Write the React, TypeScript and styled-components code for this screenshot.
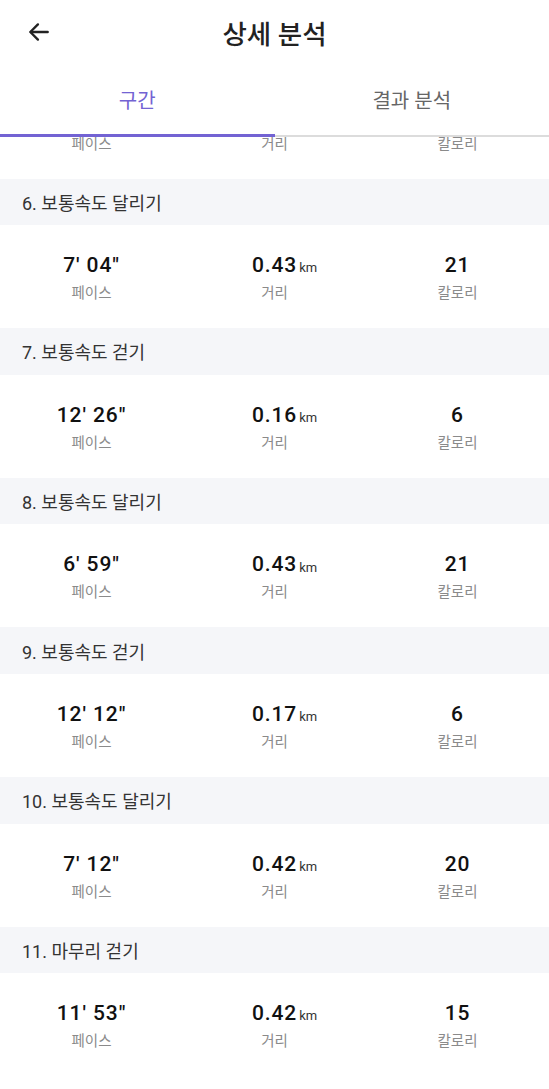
import React, { useLayoutEffect, useRef } from 'react';
import styled, { createGlobalStyle } from 'styled-components';

const GlobalStyle = createGlobalStyle`
  html, body {
    margin: 0;
    padding: 0;
    background: #ffffff;
  }
  body {
    font-family: Roboto, "Noto Sans CJK KR", "Noto Sans", sans-serif;
    -webkit-font-smoothing: antialiased;
  }
`;

const Screen = styled.div`
  display: flex;
  flex-direction: column;
  width: 549px;
  height: 1089px;
  overflow: hidden;
  background: #fff;
`;

const TopBar = styled.header`
  position: relative;
  display: flex;
  align-items: center;
  justify-content: center;
  height: 64px;
  flex-shrink: 0;
`;

const BackButton = styled.button`
  position: absolute;
  left: 26px;
  top: 19px;
  display: flex;
  padding: 0;
  border: 0;
  background: none;
  color: #222;
  cursor: pointer;
`;

const Title = styled.h1`
  margin: 0;
  font-size: 26.5px;
  font-weight: 500;
  color: #222;
`;

const Tabs = styled.nav`
  display: grid;
  grid-template-columns: 1fr 1fr;
  height: 71px;
  flex-shrink: 0;
  border-bottom: 2px solid #dcdcdc;
`;

const Tab = styled.div<{ $active?: boolean }>`
  position: relative;
  display: flex;
  align-items: center;
  justify-content: center;
  font-size: 20px;
  color: ${(p) => (p.$active ? '#7363d3' : '#666')};

  &::after {
    content: '';
    position: absolute;
    left: 0;
    right: 0;
    bottom: -2px;
    height: 3px;
    background: ${(p) => (p.$active ? '#7363d3' : 'transparent')};
  }
`;

const Scroll = styled.div`
  flex: 1;
  overflow: hidden;
  padding-bottom: 40px;
`;

const SectionHeader = styled.div`
  display: flex;
  align-items: center;
  height: 46.6px;
  padding: 0 22px;
  background: #f5f6f9;
  font-size: 18px;
  color: #333;
`;

const StatsRow = styled.div`
  display: grid;
  grid-template-columns: repeat(3, 1fr);
  height: 103px;
  box-sizing: border-box;
  padding-top: 27px;
`;

const Stat = styled.div`
  display: flex;
  flex-direction: column;
  align-items: center;
  gap: 6px;
`;

const Value = styled.div`
  position: relative;
  height: 26px;
  line-height: 26px;
  font-size: 21px;
  font-weight: 500;
  letter-spacing: 0.9px;
  color: #111;
`;

// the unit hangs off the right of the number, so the number itself stays centred
const Unit = styled.span`
  position: absolute;
  left: 100%;
  bottom: 3.8px;
  margin-left: 2px;
  font-size: 13px;
  line-height: 13px;
  font-weight: 400;
  letter-spacing: 0;
  color: #333;
`;

const Label = styled.div`
  height: 20px;
  line-height: 20px;
  font-size: 14.5px;
  color: #8a8a8a;
`;

interface Segment {
  title: string;
  pace: string;
  distance: string;
  calories: number;
}

const segments: Segment[] = [
  { title: '5. 보통속도 걷기', pace: `12' 30"`, distance: '0.16', calories: 6 },
  { title: '6. 보통속도 달리기', pace: `7' 04"`, distance: '0.43', calories: 21 },
  { title: '7. 보통속도 걷기', pace: `12' 26"`, distance: '0.16', calories: 6 },
  { title: '8. 보통속도 달리기', pace: `6' 59"`, distance: '0.43', calories: 21 },
  { title: '9. 보통속도 걷기', pace: `12' 12"`, distance: '0.17', calories: 6 },
  { title: '10. 보통속도 달리기', pace: `7' 12"`, distance: '0.42', calories: 20 },
  { title: '11. 마무리 걷기', pace: `11' 53"`, distance: '0.42', calories: 15 },
];

function BackIcon() {
  return (
    <svg width="26" height="26" viewBox="0 0 24 24" fill="none" stroke="currentColor" strokeWidth="2.2" strokeLinecap="round" strokeLinejoin="round">
      <path d="M20 12H4.5" />
      <path d="M11 5l-7 7 7 7" />
    </svg>
  );
}

function SegmentBlock({ segment }: { segment: Segment }) {
  return (
    <>
      <SectionHeader>{segment.title}</SectionHeader>
      <StatsRow>
        <Stat>
          <Value>{segment.pace}</Value>
          <Label>페이스</Label>
        </Stat>
        <Stat>
          <Value>
            {segment.distance}
            <Unit>km</Unit>
          </Value>
          <Label>거리</Label>
        </Stat>
        <Stat>
          <Value>{segment.calories}</Value>
          <Label>칼로리</Label>
        </Stat>
      </StatsRow>
    </>
  );
}

export default function App() {
  const scrollRef = useRef<HTMLDivElement>(null);

  // the list is shown scrolled down, with segment 5 tucked under the tabs
  useLayoutEffect(() => {
    if (scrollRef.current) {
      scrollRef.current.scrollTop = 46.6 + 61;
    }
  }, []);

  return (
    <>
      <GlobalStyle />
      <Screen>
        <TopBar>
          <BackButton aria-label="뒤로">
            <BackIcon />
          </BackButton>
          <Title>상세 분석</Title>
        </TopBar>
        <Tabs>
          <Tab $active>구간</Tab>
          <Tab>결과 분석</Tab>
        </Tabs>
        <Scroll ref={scrollRef}>
          {segments.map((segment) => (
            <SegmentBlock key={segment.title} segment={segment} />
          ))}
        </Scroll>
      </Screen>
    </>
  );
}
